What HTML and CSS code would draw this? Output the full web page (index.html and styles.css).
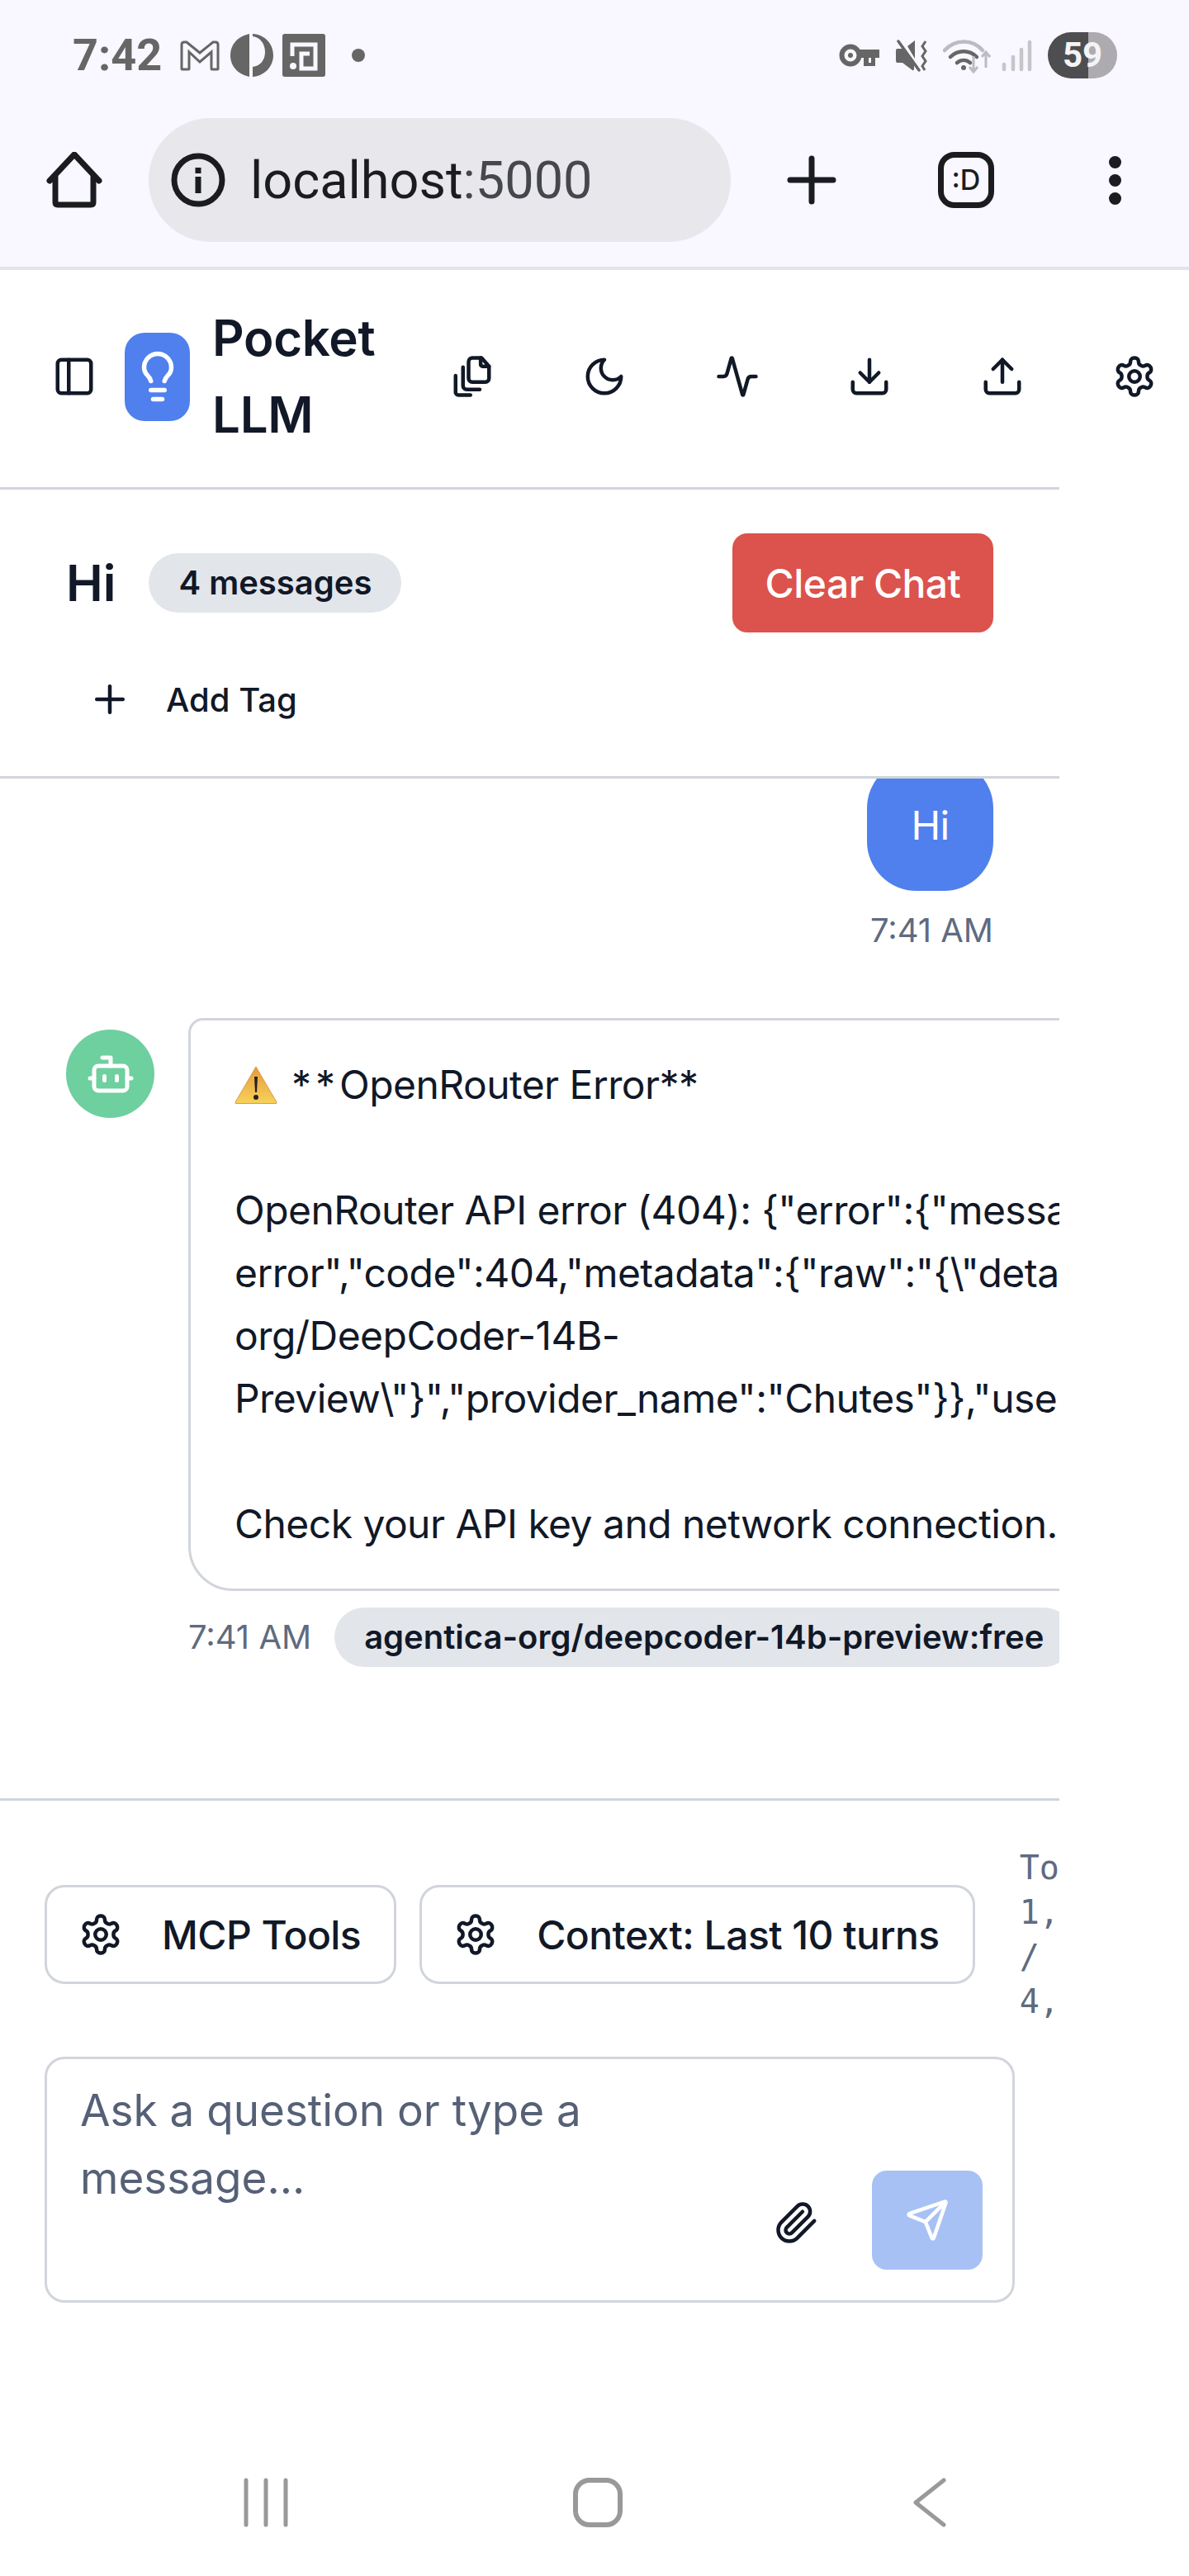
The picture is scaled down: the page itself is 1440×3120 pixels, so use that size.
FILE: index.html
```html
<!DOCTYPE html>
<html lang="en">
<head>
    <meta charset="UTF-8">
    <meta name="viewport" content="width=device-width, initial-scale=1.0">
    <title>Pocket LLM</title>
    <link rel="stylesheet" href="styles.css">
</head>
<body>
    <!-- phone + browser chrome -->
    <div class="chrome">
        <div class="status">
            <div class="status-left">
                <span class="clock">7:42</span>
                <svg class="st-m" viewBox="0 0 48 37"><path d="M2 34V5q0-3 3-3h3l16 13L40 2h3q3 0 3 3v29q0 1-1 1h-6q-1 0-1-1V14L24 26 11 14v20q0 1-1 1H3q-1 0-1-1z" fill="none" stroke="#666" stroke-width="3"/></svg>
                <svg class="st-p" viewBox="0 0 52 52"><path d="M23 0v52C9 49 0 39 0 26S9 3 23 0z" fill="#666"/><path d="M27 0c15 1 25 12 25 26S41 51 27 52V40c9-1 15-8 15-18S36 4 27 3z" fill="#666"/></svg>
                <svg class="st-s" viewBox="0 0 52 52"><rect width="52" height="52" rx="3" fill="#666"/><path d="M12 27V13h28v29H23V24h10" fill="none" stroke="#f9f7ff" stroke-width="5"/><circle cx="13" cy="39" r="4" fill="#f9f7ff"/></svg>
                <span class="st-dot"></span>
            </div>
            <div class="status-right">
                <svg class="st-key" viewBox="0 0 49 28"><circle cx="14" cy="14" r="10.5" fill="none" stroke="#666" stroke-width="6"/><circle cx="14" cy="14" r="3" fill="#666"/><path d="M24 7h25v10h-5v10H30V17h-6z" fill="#666"/><path d="M36 17h3v6h-3z" fill="#f9f7ff"/></svg>
                <svg class="st-mute" viewBox="0 0 39 39"><path d="M0 13q0-2 2-2h8l12 15v9q0 3-2 2L8 28H2q-2 0-2-2zM14 8l9-7v22z" fill="#666"/><path d="M3 2l25 35" stroke="#666" stroke-width="3.5" stroke-linecap="round"/><path d="M36 2l-4 6 4 6-4 6 4 6-4 6 3 5" fill="none" stroke="#666" stroke-width="3"/></svg>
                <svg class="st-wifi" viewBox="0 0 58 43"><path d="M2 15C15 1 36 1 48 15" fill="none" stroke="#bdbbc1" stroke-width="4.5" stroke-linecap="round"/><path d="M9 23c9-9 23-9 32 0" fill="none" stroke="#666" stroke-width="4.5" stroke-linecap="round"/><path d="M17 30c5-4 11-4 16 0" fill="none" stroke="#666" stroke-width="4.5" stroke-linecap="round"/><circle cx="25" cy="36" r="3" fill="#666"/><path d="M37 22v19m-5-6 5 6 5-6" fill="none" stroke="#bdbbc1" stroke-width="3"/><path d="M52 36V18m-5 5 5-6 5 6" fill="none" stroke="#bdbbc1" stroke-width="3"/></svg>
                <svg class="st-signal" viewBox="0 0 37 39"><g stroke="#c6c5ca" stroke-width="4.5" stroke-linecap="round"><path d="M3 30v6M14 21v15M24 12v24M34 3v33"/></g></svg>
                <span class="battery">59</span>
            </div>
        </div>
        <div class="urlbar">
            <svg class="ch-home" viewBox="0 0 68 68"><path d="M11 30v31q0 3 3 3h40q3 0 3-3V30M4 35 34 3l30 32" fill="none" stroke="#1b1c20" stroke-width="7" stroke-linejoin="round" stroke-linecap="round"/></svg>
            <div class="omnibox">
                <svg class="ch-info" viewBox="0 0 66 66"><circle cx="33" cy="33" r="29" fill="none" stroke="#1b1c20" stroke-width="7"/><path d="M29.500 18h7v7h-7zM29.500 29h7v20h-7z" fill="#1b1c20"/></svg>
                <span class="url">localhost<span class="url-port">:5000</span></span>
            </div>
            <svg class="ch-plus" viewBox="0 0 60 60"><path d="M4 30h52M30 4v52" stroke="#1b1c20" stroke-width="7" stroke-linecap="round"/></svg>
            <div class="tab-count">:D</div>
            <div class="ch-dots"><span></span><span></span><span></span></div>
        </div>
    </div>

    <div class="app">
        <header class="topbar">
            <svg class="icon side-toggle" viewBox="0 0 24 24"><rect x="3" y="3" width="18" height="18" rx="2"/><path d="M9 3v18"/></svg>
            <div class="logo">
                <svg class="logo-bulb" viewBox="0 0 24 24"><path d="M15 14c.2-1 .7-1.700 1.500-2.500 1-.9 1.500-2.200 1.500-3.500A6 6 0 0 0 6 8c0 1 .2 2.200 1.500 3.500.7.7 1.300 1.500 1.500 2.500"/><path d="M9 18h6"/><path d="M10 22h4"/></svg>
            </div>
            <h1 class="brand">Pocket LLM</h1>
            <div class="top-actions">
                <svg class="icon" viewBox="0 0 24 24"><path d="M12 2h5l4 4.500V13a2 2 0 0 1-2 2h-7a2 2 0 0 1-2-2V4a2 2 0 0 1 2-2z"/><path d="M16.500 2v3.500a1 1 0 0 0 1 1H21"/><path d="M7 7v10a2 2 0 0 0 2 2h7"/><path d="M3 11.500v9A1.500 1.500 0 0 0 4.500 22H11"/></svg>
                <svg class="icon" viewBox="0 0 24 24"><path d="M12 3a6 6 0 0 0 9 9 9 9 0 1 1-9-9Z"/></svg>
                <svg class="icon" viewBox="0 0 24 24"><path d="M22 12h-2.480a2 2 0 0 0-1.930 1.460l-2.350 8.360a.25.25 0 0 1-.48 0L9.240 2.180a.25.25 0 0 0-.48 0l-2.350 8.360A2 2 0 0 1 4.490 12H2"/></svg>
                <svg class="icon" viewBox="0 0 24 24"><path d="M21 15v4a2 2 0 0 1-2 2H5a2 2 0 0 1-2-2v-4"/><path d="M7 10l5 5 5-5"/><path d="M12 15V3"/></svg>
                <svg class="icon" viewBox="0 0 24 24"><path d="M21 15v4a2 2 0 0 1-2 2H5a2 2 0 0 1-2-2v-4"/><path d="M17 8l-5-5-5 5"/><path d="M12 3v12"/></svg>
                <svg class="icon" viewBox="0 0 24 24"><path d="M12.220 2h-.44a2 2 0 0 0-2 2v.18a2 2 0 0 1-1 1.730l-.43.25a2 2 0 0 1-2 0l-.15-.08a2 2 0 0 0-2.730.73l-.22.38a2 2 0 0 0 .73 2.730l.15.1a2 2 0 0 1 1 1.720v.51a2 2 0 0 1-1 1.740l-.15.09a2 2 0 0 0-.73 2.730l.22.38a2 2 0 0 0 2.730.73l.15-.08a2 2 0 0 1 2 0l.43.25a2 2 0 0 1 1 1.730V20a2 2 0 0 0 2 2h.44a2 2 0 0 0 2-2v-.18a2 2 0 0 1 1-1.730l.43-.25a2 2 0 0 1 2 0l.15.08a2 2 0 0 0 2.730-.73l.22-.39a2 2 0 0 0-.73-2.730l-.15-.08a2 2 0 0 1-1-1.740v-.5a2 2 0 0 1 1-1.740l.15-.09a2 2 0 0 0 .73-2.730l-.22-.38a2 2 0 0 0-2.730-.73l-.15.08a2 2 0 0 1-2 0l-.43-.25a2 2 0 0 1-1-1.730V4a2 2 0 0 0-2-2z"/><circle cx="12" cy="12" r="3"/></svg>
            </div>
        </header>

        <section class="chat-head">
            <div class="chat-title-row">
                <h2 class="chat-title">Hi</h2>
                <span class="pill count-pill">4 messages</span>
                <button class="clear-btn">Clear Chat</button>
            </div>
            <div class="add-tag">
                <svg class="icon" viewBox="0 0 24 24"><path d="M5 12h14"/><path d="M12 5v14"/></svg>
                <span>Add Tag</span>
            </div>
        </section>

        <main class="messages">
            <div class="msg-user">
                <div class="bubble">Hi</div>
                <div class="time">7:41 AM</div>
            </div>
            <div class="msg-bot">
                <div class="avatar">
                    <svg class="avatar-bot" viewBox="0 0 24 24"><path d="M12 8V4H8"/><rect x="4" y="8" width="16" height="12" rx="2"/><path d="M2 14h2"/><path d="M20 14h2"/><path d="M15 13v2"/><path d="M9 13v2"/></svg>
                </div>
                <div class="msg-body">
                    <div class="card">
                        <div class="line"><svg class="warn" viewBox="0 0 52 46"><defs><linearGradient id="warnfill" x1="0" y1="0" x2="0" y2="1"><stop offset="0" stop-color="#e59a3c"/><stop offset="1" stop-color="#f7d25a"/></linearGradient></defs><path d="M26 1 51 44q.5 1.500-1 1.500H2Q.5 45.500 1 44z" fill="url(#warnfill)" stroke="#dc9a48" stroke-width="1"/><path d="M24 13h4l-1 19h-2z" fill="#222"/><circle cx="26" cy="38" r="3" fill="#222"/></svg> <span class="stars">**</span>OpenRouter Error**</div>
                        <div class="line">&nbsp;</div>
                        <div class="line">OpenRouter API error (404): {"error":{"message":"Provider returned</div>
                        <div class="line">error","code":404,"metadata":{"raw":"{\"detail\":\"No endpoints found for agentica-</div>
                        <div class="line">org/DeepCoder-14B-</div>
                        <div class="line">Preview\"}","provider_name":"Chutes"}},"user_id":"user"}</div>
                        <div class="line">&nbsp;</div>
                        <div class="line">Check your API key and network connection.</div>
                    </div>
                    <div class="msg-meta">
                        <span class="time">7:41 AM</span>
                        <span class="pill model-pill">agentica-org/deepcoder-14b-preview:free</span>
                    </div>
                </div>
            </div>
        </main>

        <footer class="composer">
            <div class="tool-row">
                <button class="tool-btn">
                    <svg class="icon" viewBox="0 0 24 24"><path d="M12.220 2h-.44a2 2 0 0 0-2 2v.18a2 2 0 0 1-1 1.730l-.43.25a2 2 0 0 1-2 0l-.15-.08a2 2 0 0 0-2.730.73l-.22.38a2 2 0 0 0 .73 2.730l.15.1a2 2 0 0 1 1 1.720v.51a2 2 0 0 1-1 1.740l-.15.09a2 2 0 0 0-.73 2.730l.22.38a2 2 0 0 0 2.730.73l.15-.08a2 2 0 0 1 2 0l.43.25a2 2 0 0 1 1 1.730V20a2 2 0 0 0 2 2h.44a2 2 0 0 0 2-2v-.18a2 2 0 0 1 1-1.730l.43-.25a2 2 0 0 1 2 0l.15.08a2 2 0 0 0 2.730-.73l.22-.39a2 2 0 0 0-.73-2.730l-.15-.08a2 2 0 0 1-1-1.740v-.5a2 2 0 0 1 1-1.740l.15-.09a2 2 0 0 0 .73-2.730l-.22-.38a2 2 0 0 0-2.730-.73l-.15.08a2 2 0 0 1-2 0l-.43-.25a2 2 0 0 1-1-1.730V4a2 2 0 0 0-2-2z"/><circle cx="12" cy="12" r="3"/></svg>
                    MCP Tools
                </button>
                <button class="tool-btn">
                    <svg class="icon" viewBox="0 0 24 24"><path d="M12.220 2h-.44a2 2 0 0 0-2 2v.18a2 2 0 0 1-1 1.730l-.43.25a2 2 0 0 1-2 0l-.15-.08a2 2 0 0 0-2.730.73l-.22.38a2 2 0 0 0 .73 2.730l.15.1a2 2 0 0 1 1 1.720v.51a2 2 0 0 1-1 1.740l-.15.09a2 2 0 0 0-.73 2.730l.22.38a2 2 0 0 0 2.730.73l.15-.08a2 2 0 0 1 2 0l.43.25a2 2 0 0 1 1 1.730V20a2 2 0 0 0 2 2h.44a2 2 0 0 0 2-2v-.18a2 2 0 0 1 1-1.730l.43-.25a2 2 0 0 1 2 0l.15.08a2 2 0 0 0 2.730-.73l.22-.39a2 2 0 0 0-.73-2.730l-.15-.08a2 2 0 0 1-1-1.740v-.5a2 2 0 0 1 1-1.740l.15-.09a2 2 0 0 0 .73-2.730l-.22-.38a2 2 0 0 0-2.730-.73l-.15.08a2 2 0 0 1-2 0l-.43-.25a2 2 0 0 1-1-1.730V4a2 2 0 0 0-2-2z"/><circle cx="12" cy="12" r="3"/></svg>
                    Context: Last 10 turns
                </button>
                <div class="tokens">Tokens:<br>1,234<br>/<br>4,096</div>
            </div>
            <div class="input-box">
                <div class="placeholder">Ask a question or type a message...</div>
                <svg class="icon clip" viewBox="0 0 24 24"><path d="m21.440 11.050-9.190 9.190a6 6 0 0 1-8.490-8.490l8.570-8.570A4 4 0 1 1 18 8.840l-8.590 8.570a2 2 0 0 1-2.830-2.830l8.490-8.480"/></svg>
                <button class="send-btn">
                    <svg class="send-icon" viewBox="0 0 24 24"><path d="M14.536 21.686a.5.5 0 0 0 .937-.024l6.500-19a.496.496 0 0 0-.635-.635l-19 6.500a.5.5 0 0 0-.024.937l7.930 3.180a2 2 0 0 1 1.112 1.110z"/><path d="m21.854 2.147-10.940 10.939"/></svg>
                </button>
            </div>
        </footer>
    </div>

    <!-- android nav -->
    <nav class="navbar">
        <svg class="nav-recent" viewBox="0 0 56 60"><path d="M4 3v54M28 3v54M52 3v54" stroke="#999" stroke-width="5" stroke-linecap="round"/></svg>
        <svg class="nav-home" viewBox="0 0 60 60"><rect x="3" y="3" width="54" height="54" rx="17" fill="none" stroke="#999" stroke-width="6"/></svg>
        <svg class="nav-back" viewBox="0 0 42 60"><path d="M38 3 4 30l34 27" fill="none" stroke="#999" stroke-width="5" stroke-linecap="round" stroke-linejoin="round"/></svg>
    </nav>
</body>
</html>
```
FILE: styles.css
```css
* { box-sizing: border-box; }
html, body { margin: 0; padding: 0; }
body { width: 1440px; height: 3120px; overflow: hidden; background: #fff; color: #111827; font-family: Inter, "Liberation Sans", sans-serif; font-size: 48px; letter-spacing: -0.55px; }
button { font-family: inherit; color: inherit; letter-spacing: inherit; }
svg { display: block; flex-shrink: 0; }

/* browser chrome */
.chrome { height: 327px; background: #f9f7ff; border-bottom: 4px solid #e4e2ea; letter-spacing: 0; }
.status { height: 134px; padding: 0 87px 0 88px; display: flex; align-items: center; justify-content: space-between; }
.status-left, .status-right { display: flex; align-items: center; }
.clock { font-family: Roboto, sans-serif; font-weight: 700; font-size: 54px; color: #666; line-height: 1; }
.st-m { width: 48px; height: 37px; margin-left: 22px; }
.st-p { width: 52px; height: 52px; margin-left: 13px; }
.st-s { width: 52px; height: 52px; margin-left: 11px; }
.st-dot { width: 16px; height: 16px; margin-left: 32px; background: #666; border-radius: 50%; }
.st-key { width: 49px; height: 28px; }
.st-mute { width: 39px; height: 39px; margin-left: 20px; }
.st-wifi { width: 58px; height: 43px; margin-left: 18px; }
.st-signal { width: 37px; height: 39px; margin-left: 13px; }
.battery { width: 84px; height: 56px; margin-left: 19px; border-radius: 28px; background: linear-gradient(90deg, #4e4e51 58%, #adabb0 58%); color: #f4f4f6; font-family: Roboto, sans-serif; font-weight: 700; font-size: 42px; line-height: 56px; text-align: center; }

.urlbar { height: 150px; margin-top: 9px; padding-left: 56px; display: flex; align-items: center; }
.ch-home { width: 68px; height: 68px; }
.omnibox { width: 705px; height: 150px; margin-left: 56px; padding-left: 27px; background: #e7e7ec; border-radius: 75px; display: flex; align-items: center; }
.ch-info { width: 66px; height: 66px; }
.url { margin-left: 30px; font-family: Roboto, sans-serif; font-weight: 400; font-size: 63px; color: #1b1c20; }
.url-port { color: #46474c; }
.ch-plus { width: 60px; height: 60px; margin-left: 68px; }
.tab-count { width: 68px; height: 68px; margin-left: 123px; border: 7px solid #1b1c20; border-radius: 20px; font-size: 34px; font-weight: 500; line-height: 54px; text-align: center; color: #1b1c20; }
.ch-dots { margin-left: 139px; display: flex; flex-direction: column; gap: 7px; }
.ch-dots span { width: 15px; height: 15px; background: #1b1c20; border-radius: 50%; }

/* app */
.app { width: 1283px; }
.icon { width: 54px; height: 54px; fill: none; stroke: #111827; stroke-width: 2; stroke-linecap: round; stroke-linejoin: round; }

.topbar { height: 266px; padding: 0 0 5px 63px; border-bottom: 3px solid #d1d5db; display: flex; align-items: center; }
.logo { width: 79px; height: 107px; margin-left: 34px; background: #4f80ed; border-radius: 24px; display: flex; align-items: center; justify-content: center; flex-shrink: 0; }
.logo-bulb { width: 66px; height: 66px; fill: none; stroke: #fff; stroke-width: 2; stroke-linecap: round; stroke-linejoin: round; }
.brand { width: 288px; margin: 0 0 0 27px; font-size: 60px; font-weight: 600; line-height: 93px; flex-shrink: 0; letter-spacing: -0.3px; }
.top-actions { display: flex; gap: 106.4px; flex-shrink: 0; }

.chat-head { height: 350px; padding: 53px 80px 0; border-bottom: 3px solid #d1d5db; }
.chat-title-row { display: flex; align-items: center; height: 120px; }
.chat-title { margin: 0; font-size: 60px; font-weight: 600; letter-spacing: 0; }
.pill { background: #e2e5ea; border-radius: 36px; font-weight: 600; white-space: nowrap; letter-spacing: 0; }
.count-pill { margin-left: 40px; padding: 0 36px; height: 72px; font-size: 40px; line-height: 72px; }
.clear-btn { margin-left: auto; width: 316px; height: 120px; border: 0; border-radius: 18px; background: #dc524c; color: #fff; font-size: 48px; font-weight: 500; }
.add-tag { margin: 51px 0 0 26px; display: flex; align-items: center; gap: 41px; font-size: 40px; font-weight: 500; height: 60px; letter-spacing: 0; }

.messages { height: 1238px; padding-right: 80px; overflow: hidden; border-bottom: 3px solid #d1d5db; }
.msg-user { margin-top: -24px; display: flex; flex-direction: column; align-items: flex-end; }
.bubble { width: 153px; padding: 42px 0 41px; line-height: 77px; text-align: center; background: #4f80ed; color: #fff; border-radius: 60px; }
.time { font-size: 40px; line-height: 60px; color: #5f6b80; letter-spacing: 0; }
.msg-user .time { margin-top: 18px; }
.msg-bot { margin-top: 76px; padding-left: 80px; display: flex; gap: 41px; width: 1283px; }
.avatar { width: 107px; height: 107px; margin-top: 14px; background: #6ecf9f; border-radius: 50%; display: flex; align-items: center; justify-content: center; flex-shrink: 0; }
.avatar-bot { width: 60px; height: 60px; fill: none; stroke: #fff; stroke-width: 2; stroke-linecap: round; stroke-linejoin: round; }
.msg-body { flex: 0 0 1055px; overflow: hidden; }
.card { width: 1200px; padding: 40px 54px 40px 53px; background: #fff; border: 3px solid #d1d5db; border-radius: 18px 54px 54px 54px; line-height: 76px; white-space: nowrap; }
.warn { display: inline-block; width: 52px; height: 46px; vertical-align: -6px; margin-right: 4px; }
.stars { letter-spacing: 5px; }
.msg-meta { margin-top: 20px; display: flex; align-items: center; gap: 28px; }
.msg-meta .time { flex-shrink: 0; }
.model-pill { padding: 0 36px; height: 72px; font-size: 40px; line-height: 72px; flex-shrink: 0; }

.composer { overflow: hidden; }
.tool-row { margin-top: 54px; padding-left: 54px; height: 216px; display: flex; align-items: center; }
.tool-btn { height: 120px; padding: 0 40px 0 38px; background: #fff; border: 3px solid #d1d5db; border-radius: 24px; display: flex; align-items: center; gap: 47px; font-size: 48px; font-weight: 500; flex-shrink: 0; margin-right: 28px; white-space: nowrap; }
.tokens { margin-left: 26px; flex-shrink: 0; font-family: "DejaVu Sans Mono", "Liberation Mono", monospace; font-size: 40px; line-height: 54px; color: #5f6b80; letter-spacing: 0; }
.input-box { width: 1175px; height: 298px; margin: 40px 0 0 54px; padding: 22px 36px 37px 40px; border: 3px solid #d1d5db; border-radius: 24px; display: flex; align-items: flex-end; }
.placeholder { align-self: flex-start; width: 690px; font-size: 53px; line-height: 81.5px; color: #566177; letter-spacing: 0; }
.clip { margin: 0 64px 30px auto; }
.send-btn { width: 134px; height: 120px; padding: 0; border: 0; border-radius: 18px; background: #a7c1f5; display: flex; align-items: center; justify-content: center; }
.send-icon { width: 54px; height: 54px; fill: none; stroke: #fff; stroke-width: 2; stroke-linecap: round; stroke-linejoin: round; }

/* android nav */
.navbar { margin-top: 212px; padding-left: 121px; display: grid; grid-template-columns: repeat(3, 402px); justify-items: center; align-items: center; }
.nav-recent { width: 56px; height: 60px; }
.nav-home { width: 60px; height: 60px; }
.nav-back { width: 42px; height: 60px; }
```
